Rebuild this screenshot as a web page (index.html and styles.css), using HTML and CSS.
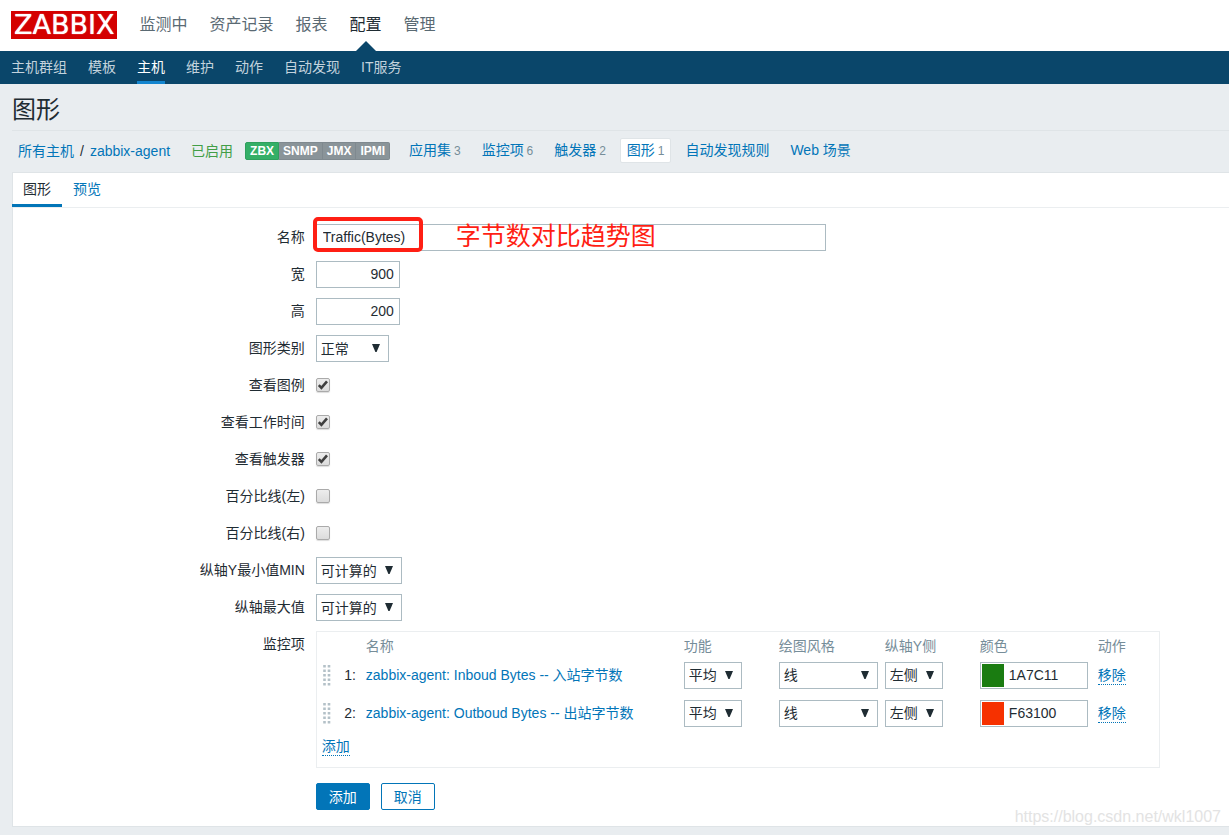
FILE: index.html
```html
<!DOCTYPE html>
<html lang="zh-CN">
<head>
<meta charset="utf-8">
<title>图形</title>
<link rel="stylesheet" href="styles.css">
</head>
<body>
<header class="top">
  <a class="logo" href="#">ZABBIX</a>
  <nav class="main-nav">
    <a href="#">监测中</a>
    <a href="#">资产记录</a>
    <a href="#">报表</a>
    <a class="active" href="#">配置</a>
    <a href="#">管理</a>
  </nav>
</header>
<nav class="sub-nav">
  <a href="#">主机群组</a>
  <a href="#">模板</a>
  <a class="active" href="#">主机</a>
  <a href="#">维护</a>
  <a href="#">动作</a>
  <a href="#">自动发现</a>
  <a href="#">IT服务</a>
</nav>
<main class="page">
  <h1 class="title">图形</h1>
  <div class="host-bar">
    <div class="crumbs"><a href="#">所有主机</a><span>/</span><a href="#">zabbix-agent</a></div>
    <span class="enabled">已启用</span>
    <div class="badges"><span class="on">ZBX</span><span>SNMP</span><span>JMX</span><span>IPMI</span></div>
    <nav class="host-nav">
      <a href="#">应用集 <small>3</small></a>
      <a href="#">监控项 <small>6</small></a>
      <a href="#">触发器 <small>2</small></a>
      <a class="active" href="#">图形 <small>1</small></a>
      <a href="#">自动发现规则</a>
      <a href="#">Web 场景</a>
    </nav>
  </div>
  <section class="panel">
    <nav class="tabs">
      <a class="active" href="#">图形</a>
      <a href="#">预览</a>
    </nav>
    <form class="form">
      <div class="row">
        <label for="name">名称</label>
        <div class="field name-field">
          <input class="text wide" id="name" type="text" value="Traffic(Bytes)">
          <span class="mark-box"></span>
          <span class="mark-text">字节数对比趋势图</span>
        </div>
      </div>
      <div class="row">
        <label for="width">宽</label>
        <div class="field"><input class="text number" id="width" type="text" value="900"></div>
      </div>
      <div class="row">
        <label for="height">高</label>
        <div class="field"><input class="text number" id="height" type="text" value="200"></div>
      </div>
      <div class="row">
        <label for="type">图形类别</label>
        <div class="field"><select class="type-select" id="type"><option>正常</option></select></div>
      </div>
      <div class="row">
        <label for="legend">查看图例</label>
        <div class="field"><input class="check" id="legend" type="checkbox" checked></div>
      </div>
      <div class="row">
        <label for="work">查看工作时间</label>
        <div class="field"><input class="check" id="work" type="checkbox" checked></div>
      </div>
      <div class="row">
        <label for="triggers">查看触发器</label>
        <div class="field"><input class="check" id="triggers" type="checkbox" checked></div>
      </div>
      <div class="row">
        <label for="pleft">百分比线(左)</label>
        <div class="field"><input class="check" id="pleft" type="checkbox"></div>
      </div>
      <div class="row">
        <label for="pright">百分比线(右)</label>
        <div class="field"><input class="check" id="pright" type="checkbox"></div>
      </div>
      <div class="row">
        <label for="ymin">纵轴Y最小值MIN</label>
        <div class="field"><select class="axis-select" id="ymin"><option>可计算的</option></select></div>
      </div>
      <div class="row">
        <label for="ymax">纵轴最大值</label>
        <div class="field"><select class="axis-select" id="ymax"><option>可计算的</option></select></div>
      </div>
      <div class="row items-row">
        <span class="row-label" id="items-label">监控项</span>
        <div class="field">
          <div class="items-box">
            <table class="items" aria-labelledby="items-label">
              <colgroup>
                <col class="c-grip"><col class="c-num"><col><col class="c-func"><col class="c-style"><col class="c-side"><col class="c-color"><col class="c-action">
              </colgroup>
              <thead>
                <tr><th></th><th></th><th>名称</th><th>功能</th><th>绘图风格</th><th>纵轴Y侧</th><th>颜色</th><th>动作</th></tr>
              </thead>
              <tbody>
                <tr>
                  <td><span class="grip"></span></td>
                  <td class="num">1:</td>
                  <td><a href="#">zabbix-agent: Inboud Bytes -- 入站字节数</a></td>
                  <td><select aria-label="功能 1" class="short-select"><option>平均</option></select></td>
                  <td><select aria-label="绘图风格 1" class="style-select"><option>线</option></select></td>
                  <td><select aria-label="纵轴Y侧 1" class="short-select"><option>左侧</option></select></td>
                  <td><div class="color"><span class="swatch green"></span><input aria-label="颜色 1" type="text" value="1A7C11"></div></td>
                  <td><button class="link" type="button">移除</button></td>
                </tr>
                <tr>
                  <td><span class="grip"></span></td>
                  <td class="num">2:</td>
                  <td><a href="#">zabbix-agent: Outboud Bytes -- 出站字节数</a></td>
                  <td><select aria-label="功能 2" class="short-select"><option>平均</option></select></td>
                  <td><select aria-label="绘图风格 2" class="style-select"><option>线</option></select></td>
                  <td><select aria-label="纵轴Y侧 2" class="short-select"><option>左侧</option></select></td>
                  <td><div class="color"><span class="swatch red"></span><input aria-label="颜色 2" type="text" value="F63100"></div></td>
                  <td><button class="link" type="button">移除</button></td>
                </tr>
              </tbody>
            </table>
            <div class="add-line"><button class="link" type="button">添加</button></div>
          </div>
          <div class="actions">
            <button class="btn primary" type="submit">添加</button>
            <button class="btn" type="button">取消</button>
          </div>
        </div>
      </div>
    </form>
  </section>
</main>
<span class="watermark">https://blog.csdn.net/wkl1007</span>
</body>
</html>
```
FILE: styles.css
```css
* { box-sizing: border-box; }
body {
  position: relative;
  margin: 0;
  min-height: 100vh;
  background: #e9edf0;
  color: #1f2c33;
  font: 14px/18px "Liberation Sans", "Noto Sans CJK SC", sans-serif;
}
a { color: #0275b8; text-decoration: none; }
input, select, button { font: inherit; color: inherit; margin: 0; }

.top {
  display: flex;
  align-items: center;
  gap: 22px;
  height: 51px;
  padding: 0 11px 1px;
  background: #fff;
}
.logo {
  padding: 0 3px;
  background: #d40000;
  color: #fff;
  font: 27px/28px "DejaVu Sans", sans-serif;
  text-shadow: 0 0 1px #fff;
}
.main-nav { display: flex; align-self: stretch; gap: 22px; font-size: 16px; line-height: 50px; }
.main-nav a { color: #5a6a73; }
.main-nav .active { position: relative; color: #1f2c33; }
.main-nav .active::after {
  content: "";
  position: absolute;
  left: 50%;
  bottom: -1px;
  margin-left: -10px;
  border: 10px solid transparent;
  border-top: 0;
  border-bottom-color: #0a466a;
}
.sub-nav {
  display: flex;
  gap: 21px;
  height: 33px;
  padding: 0 11px;
  background: #0a466a;
  line-height: 32px;
}
.sub-nav a { color: #c3d3dd; }
.sub-nav .active { color: #fff; border-bottom: 3px solid #1385cf; }

.page { padding: 0 0 8px 12px; }
.title { margin: 0; height: 47px; border-bottom: 1px solid #dfe4e7; font-size: 24px; font-weight: 400; line-height: 52px; }
.host-bar { display: flex; align-items: center; height: 41px; padding: 0 0 2px 6px; }
.crumbs { display: flex; gap: 6px; margin-right: 21px; }
.enabled { color: #429e47; margin-right: 12px; }
.badges { display: flex; margin-right: 12px; font-size: 12px; font-weight: 700; line-height: 16px; color: #fff; }
.badges span { padding: 0 4px; border: 1px solid #7f898f; border-left-width: 0; background: #8a9499; }
.badges span:first-child { border-left-width: 1px; border-radius: 2px 0 0 2px; }
.badges span:last-child { border-radius: 0 2px 2px 0; }
.badges .on { background: #34af67; border-color: #2f9f5e; }
.host-nav { display: flex; gap: 7px; white-space: nowrap; }
.host-nav a { padding: 2px 6px; border: 1px solid transparent; border-radius: 2px; }
.host-nav .active { background: #fff; border-color: #dfe4e7; }
.host-nav small { margin-left: -1px; font-size: 12px; color: #768d99; }

.panel { border: 1px solid #dfe4e7; border-width: 1px 0 1px 1px; background: #fff; }
.tabs { display: flex; height: 35px; border-bottom: 1px solid #ebeef0; line-height: 32px; }
.tabs a { height: 34px; padding: 0 11px; }
.tabs .active { margin-left: -1px; color: #1f2c33; border-bottom: 3px solid #0275b8; }

.form { display: flex; flex-direction: column; gap: 10px; padding: 16px 0; }
.row { display: flex; align-items: center; gap: 11px; min-height: 27px; }
.row label, .row-label { width: 24%; flex: none; text-align: right; }
.row label { padding-bottom: 2px; }
.items-row { align-items: flex-start; }
.row-label { line-height: 26px; }
.field { flex: 1; display: flex; }
.items-row .field { display: block; }
.name-field { position: relative; }
.text {
  height: 27px;
  padding: 0 6px 2px;
  border: 1px solid #acbbc2;
  border-radius: 0;
  background: #fff;
}
.wide { width: 510px; }
.number { width: 84px; padding: 0 5px 2px; text-align: right; }
.mark-box {
  position: absolute;
  left: -3px;
  top: -7px;
  width: 110px;
  height: 35px;
  border: 4px solid #ff1f14;
  border-radius: 5px;
}
.mark-text { position: absolute; left: 140px; top: 0; color: #ff1f14; font-size: 25px; line-height: 24px; }

select {
  appearance: none;
  height: 27px;
  padding: 0 4px;
  border: 1px solid #acbbc2;
  border-radius: 0;
  background: #fff url("data:image/svg+xml,%3Csvg xmlns='http://www.w3.org/2000/svg' width='8' height='8'%3E%3Cpath d='M0 0h8L4.6 8H3.4z' fill='%231f2c33'/%3E%3C/svg%3E") no-repeat right 8px top 8px;
}
.type-select { width: 73px; }
.axis-select { width: 86px; }
.short-select { width: 58px; }
.style-select { width: 99px; }

.row .check {
  appearance: none;
  width: 14px;
  height: 14px;
  margin-bottom: 2px;
  border: 1px solid #aaa;
  border-radius: 2px;
  background: linear-gradient(#ededed, #dcdcdc);
  box-shadow: 0 1px 1px #ddd;
}
.row .check:checked {
  background: url("data:image/svg+xml,%3Csvg xmlns='http://www.w3.org/2000/svg' width='12' height='12'%3E%3Cpath d='M1.8 6.2 4.4 8.8 10 2.4' fill='none' stroke='%23404040' stroke-width='2.6'/%3E%3C/svg%3E") center no-repeat, linear-gradient(#ededed, #dcdcdc);
}

.items-box { max-width: 844px; padding-bottom: 5px; border: 1px solid #ebeef0; }
.items { width: 100%; table-layout: fixed; border-collapse: collapse; white-space: nowrap; }
.items th { height: 24px; padding: 4px 5px 0; color: #768d99; font-weight: 400; text-align: left; }
.items td { height: 38px; padding: 0 5px; vertical-align: middle; }
.items .num { padding: 0 5px 0 0; text-align: right; }
.items select { display: block; }
.c-grip, .c-num { width: 22px; }
.c-func, .c-side { width: 95px; }
.c-style { width: 106px; }
.c-color { width: 118px; }
.c-action { width: 66px; }
.grip {
  display: block;
  width: 9px;
  height: 22px;
  background: url("data:image/svg+xml,%3Csvg xmlns='http://www.w3.org/2000/svg' width='9' height='22'%3E%3Cpath d='M2.5 1v22M7 1v22' fill='none' stroke='%23b4c1c8' stroke-width='2.6' stroke-dasharray='2.4 2.1'/%3E%3C/svg%3E") no-repeat;
}
.color { display: flex; align-items: center; height: 27px; padding-left: 1px; border: 1px solid #acbbc2; }
.swatch { flex: none; width: 22px; height: 23px; }
.green { background: #1a7c11; }
.red { background: #f63100; }
.color input { flex: 1; min-width: 0; padding: 0 5px; border: 0; background: none; }
.link {
  padding: 0;
  border: 0;
  border-bottom: 1px dotted #0275b8;
  background: none;
  color: #0275b8;
  line-height: 18px;
}
.add-line { padding: 5px 5px 6px; }
.add-line .link { display: block; }
.actions { display: flex; gap: 11px; margin-top: 15px; }
.btn {
  width: 54px;
  height: 27px;
  padding: 0;
  border: 1px solid #0275b8;
  border-radius: 2px;
  background: #fff;
  color: #0275b8;
}
.primary { background: #0275b8; color: #fff; }
.watermark {
  position: absolute;
  right: 8px;
  bottom: 9px;
  color: #e3e3e3;
  font-size: 16px;
}
```
